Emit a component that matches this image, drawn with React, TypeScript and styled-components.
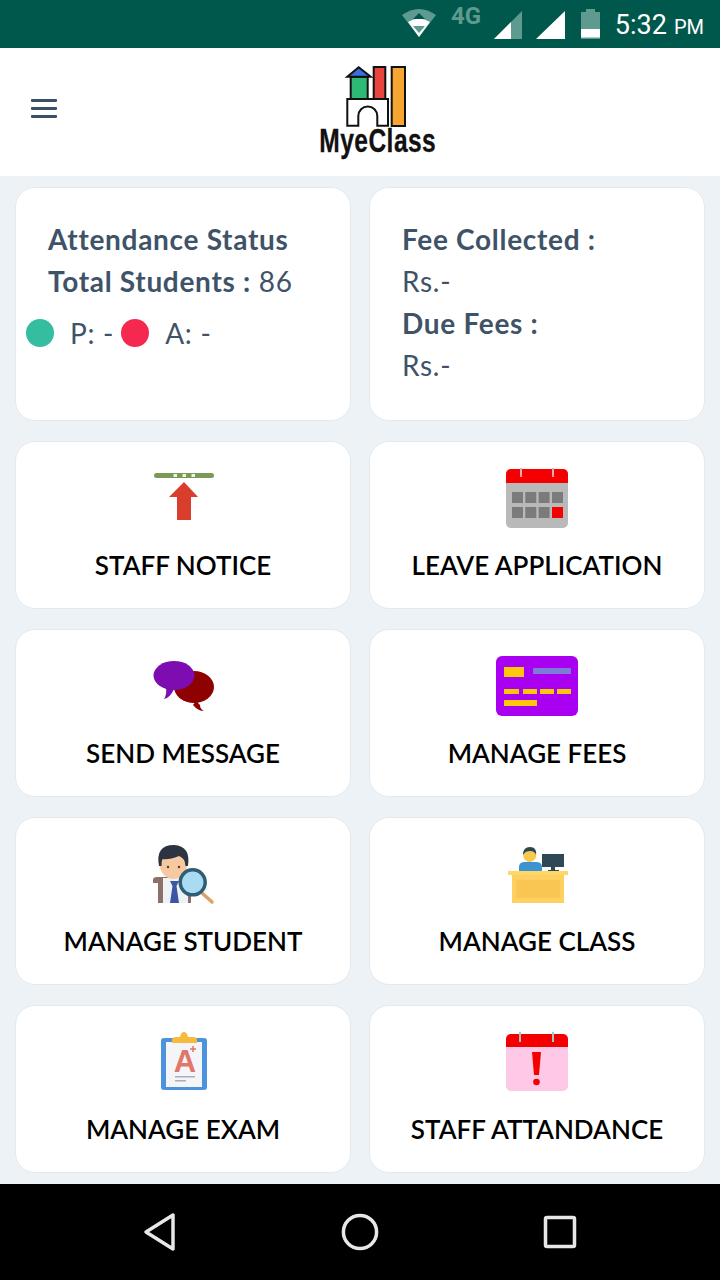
import React from 'react'
import styled, { createGlobalStyle } from 'styled-components'

const GlobalStyle = createGlobalStyle`
  html, body {
    margin: 0;
    padding: 0;
    background: #edf2f6;
    font-family: 'Lato', 'Open Sans', sans-serif;
  }
`

const Screen = styled.div`
  width: 720px;
  height: 1280px;
  display: flex;
  flex-direction: column;
  overflow: hidden;
`

const StatusBar = styled.div`
  height: 48px;
  flex: none;
  background: #00574b;
  display: flex;
  align-items: center;
  justify-content: flex-end;
  color: #ffffff;
  font-family: 'Roboto', sans-serif;
`

const Clock = styled.div`
  margin: 4px 16px 0 11px;
  font-size: 27px;
  line-height: 44px;
  white-space: nowrap;
`

const Meridiem = styled.span`
  font-size: 20px;
  margin-left: 7px;
`

const Header = styled.div`
  height: 128px;
  flex: none;
  background: #ffffff;
  display: flex;
  align-items: center;
  padding-left: 31px;
  box-sizing: border-box;
`

const MenuButton = styled.div`
  width: 26px;
  display: flex;
  flex-direction: column;
  gap: 5px;
  margin-bottom: 7px;
`

const MenuLine = styled.span`
  display: block;
  height: 3px;
  background: #3b5068;
  border-radius: 1px;
`

const Logo = styled.svg`
  width: 170px;
  height: 110px;
  margin: 0 0 4px 243px;
`

const Content = styled.div`
  flex: 1;
  background: #edf2f6;
  padding: 11px 15px;
  box-sizing: border-box;
  display: grid;
  grid-template-columns: 336px 336px;
  grid-auto-rows: 168px;
  grid-template-rows: 234px;
  column-gap: 18px;
  row-gap: 20px;
`

const Card = styled.div`
  background: #ffffff;
  border: 1px solid #e4e9ee;
  border-radius: 20px;
  box-sizing: border-box;
`

const InfoCard = styled(Card)`
  padding: 30px 10px 0 32px;
  color: #3f5368;
  font-size: 28px;
  line-height: 42px;
  letter-spacing: 0.7px;
`

const InfoLine = styled.div`
  white-space: nowrap;
`

const Strong = styled.span`
  font-weight: 700;
`

const LegendRow = styled.div`
  display: flex;
  align-items: center;
  margin: 10px 0 0 -22px;
`

const Dot = styled.span<{ $color: string }>`
  width: 28px;
  height: 28px;
  border-radius: 50%;
  background: ${(props) => props.$color};
  margin-right: 16px;
  flex: none;
`

const LegendText = styled.span`
  margin-right: 7px;
`

const MenuCard = styled(Card)`
  display: flex;
  flex-direction: column;
  align-items: center;
  padding-top: 23px;
`

const MenuIcon = styled.svg`
  width: 90px;
  height: 64px;
  flex: none;
`

const MenuLabel = styled.div`
  margin-top: 20px;
  color: #000000;
  font-size: 26px;
  line-height: 32px;
  font-weight: 600;
  white-space: nowrap;
`

const NavBar = styled.div`
  height: 96px;
  flex: none;
  background: #000000;
  display: flex;
  align-items: center;
  justify-content: center;
  gap: 160px;
`

const NavIcon = styled.svg`
  width: 40px;
  height: 40px;
  fill: none;
  stroke: #e8e8e8;
  stroke-width: 3.5;
  stroke-linejoin: round;
`

const StatusIcons = () => (
  <svg width="205" height="48" viewBox="400 0 205 48">
    <path d="M403 15 Q420 3 437 15 L420 37 Z" fill="#5f9a90" />
    <path d="M409 22 Q420 15 431 22 L420 37 Z" fill="#ffffff" />
    <path d="M420 13 L426 19 L414 19 Z" fill="#00574b" />
    <path d="M414 26 L426 26 L420 33 Z" fill="#5f9a90" />
    <text x="452" y="24" fontFamily="Roboto, sans-serif" fontWeight="700" fontSize="24" fill="#5f9a90">
      4G
    </text>
    <path d="M495 39 L523 11 L523 39 Z" fill="#5f9a90" />
    <path d="M495 39 L512 22 L512 39 Z" fill="#ffffff" />
    <path d="M537 39 L566 11 L566 39 Z" fill="#ffffff" />
    <path d="M587 9 H596 V12 H601 V39 H582 V12 H587 Z" fill="#5f9a90" />
    <rect x="582" y="29" width="19" height="8.5" fill="#ffffff" />
  </svg>
)

const LogoMark = () => (
  <Logo viewBox="0 0 170 110">
    <g stroke="#111111" strokeWidth="2">
      <rect x="50.7" y="21.7" width="17" height="22.3" fill="#2dba75" />
      <path d="M58.7 12.3 L70.7 21.7 H47.3 Z" fill="#3b6fe0" />
      <rect x="73.7" y="12" width="11.6" height="32" fill="#e8453f" />
      <rect x="91.7" y="12" width="13.3" height="59" fill="#f7a531" />
      <path
        d="M47.3 44 H88 V70.7 H77.3 V61 A9.5 9.5 0 0 0 58.3 61 V70.7 H47.3 Z"
        fill="#ffffff"
      />
    </g>
    <text
      transform="translate(19.3 97) scale(0.745 1)"
      fontFamily="'Liberation Sans', sans-serif"
      fontWeight="700"
      fontSize="33"
      letterSpacing="0.6"
      stroke="#111111"
      strokeWidth="0.3"
      fill="#111111"
    >
      MyeClass
    </text>
  </Logo>
)

const NoticeIcon = () => (
  <MenuIcon viewBox="0 0 90 64">
    <rect x="16" y="8" width="60" height="5" rx="2.5" fill="#7b9a55" />
    <rect x="35.5" y="9" width="3.5" height="3" fill="#eef3e6" />
    <rect x="44.5" y="9" width="3.5" height="3" fill="#eef3e6" />
    <rect x="53.5" y="9" width="3.5" height="3" fill="#eef3e6" />
    <path d="M46 17 L60 32 H53 V55 H39 V32 H31 Z" fill="#d93d2b" />
  </MenuIcon>
)

const LeaveIcon = () => (
  <MenuIcon viewBox="0 0 90 64">
    <rect x="14" y="4" width="62" height="59" rx="5" fill="#b9b9b9" />
    <path d="M14 18 V9 a5 5 0 0 1 5 -5 H71 a5 5 0 0 1 5 5 V18 Z" fill="#f40000" />
    <rect x="28" y="3" width="2" height="9" fill="#e7a9a9" />
    <rect x="60" y="3" width="2" height="9" fill="#e7a9a9" />
    {[20, 33.3, 46.6, 60].map((x) => (
      <rect key={x} x={x} y="27" width="11" height="11" fill="#7b7b7b" />
    ))}
    {[20, 33.3, 46.6].map((x) => (
      <rect key={x} x={x} y="42" width="11" height="11" fill="#7b7b7b" />
    ))}
    <rect x="60" y="42" width="11" height="11" fill="#f40000" />
  </MenuIcon>
)

const MessageIcon = () => (
  <MenuIcon viewBox="0 0 90 64">
    <ellipse cx="56" cy="34" rx="20" ry="16" fill="#8f0000" />
    <path d="M58 48 L62 52 Q62 56 66 58 Q60 58 55 52 Z" fill="#8f0000" />
    <ellipse cx="36" cy="22.5" rx="20.5" ry="14.5" fill="#7d0db0" />
    <path d="M28 34 Q29 42 26 46 Q32 45 36 36 Z" fill="#7d0db0" />
  </MenuIcon>
)

const FeesIcon = () => (
  <MenuIcon viewBox="0 0 90 64">
    <rect x="4" y="3" width="82" height="60" rx="6" fill="#aa00f2" />
    <rect x="12" y="14" width="20" height="10" fill="#ffc60a" />
    <rect x="41" y="15" width="38" height="6" rx="1" fill="#7b7bd8" />
    <rect x="12" y="36" width="15" height="5" fill="#ffc60a" />
    <rect x="31" y="36" width="14" height="5" fill="#ffc60a" />
    <rect x="48" y="36" width="14" height="5" fill="#ffc60a" />
    <rect x="65" y="36" width="14" height="5" fill="#ffc60a" />
    <rect x="12" y="47" width="33" height="6" fill="#ffc60a" />
  </MenuIcon>
)

const StudentIcon = () => (
  <MenuIcon viewBox="0 0 90 64">
    <path d="M15 42 V39 Q15 36 19 36 H31 V42 H25 V62 H20 V42 Z" fill="#8d7068" />
    <rect x="48" y="55" width="5" height="7" fill="#8d7068" />
    <rect x="25" y="37" width="25" height="25" fill="#eef2f7" />
    <path d="M32 40 H41 L38.5 45 L41 62 H32 L34.5 45 Z" fill="#3d55a5" />
    <ellipse cx="35.5" cy="24" rx="13.5" ry="14" fill="#f6c9a0" />
    <path d="M21 25 Q17 4 36 4 Q53 5 50 25 L47.5 25 Q47 17 41 15 Q31 19 24.5 18 Q23.5 20 23.5 25 Z" fill="#2b3440" />
    <circle cx="30" cy="26" r="1.2" fill="#5a3825" />
    <circle cx="41" cy="26" r="1.2" fill="#5a3825" />
    <path d="M64 52 L74 61" stroke="#d9a36a" strokeWidth="3.5" strokeLinecap="round" />
    <circle cx="54.7" cy="41.3" r="12.5" fill="#a9dcf2" stroke="#2f5d72" strokeWidth="3.5" />
  </MenuIcon>
)

const ClassIcon = () => (
  <MenuIcon viewBox="0 0 90 64">
    <path d="M27 30 V26 Q27 21 33 21 H44 Q50 21 50 26 V30 Z" fill="#3b93d0" />
    <circle cx="37.7" cy="14.5" r="6.5" fill="#f9c84f" />
    <path d="M31 14 Q31 6 38 6 Q45 6 44 14 Q43 10 38 10 Q33 10 31 14 Z" fill="#2c4454" />
    <rect x="50" y="13" width="22" height="13" fill="#2f4858" />
    <rect x="59" y="26" width="4" height="3" fill="#2f4858" />
    <rect x="56" y="29" width="11" height="1.5" fill="#2f4858" />
    <rect x="20" y="34" width="52" height="28" fill="#ffd060" />
    <rect x="16" y="30" width="60" height="4" fill="#ffd766" />
    <rect x="24" y="39" width="44" height="18" fill="#f9c654" />
  </MenuIcon>
)

const ExamIcon = () => (
  <MenuIcon viewBox="0 0 90 64">
    <rect x="23" y="9" width="46" height="52" rx="3" fill="#4c92dc" />
    <rect x="28" y="13" width="36" height="45" fill="#f3f5f9" />
    <path d="M34 14 V11 Q34 8 38 8 H42 Q43 3 46 3 Q49 3 50 8 H55 Q59 8 59 11 V14 Z" fill="#f9b93a" />
    <text
      x="47"
      y="43"
      textAnchor="middle"
      fontFamily="'Liberation Sans', sans-serif"
      fontWeight="700"
      fontSize="31"
      fill="#e2766b"
    >
      A
    </text>
    <path d="M55 17 V23 M52 20 H58" stroke="#e2766b" strokeWidth="1.5" />
    <rect x="37" y="47" width="20" height="1.5" fill="#a9b0b8" />
    <rect x="37" y="51" width="11" height="1.5" fill="#a9b0b8" />
  </MenuIcon>
)

const AttendanceIcon = () => (
  <MenuIcon viewBox="0 0 90 64">
    <rect x="14" y="5" width="62" height="57" rx="5" fill="#ffc8e6" />
    <path d="M14 18 V10 a5 5 0 0 1 5 -5 H71 a5 5 0 0 1 5 5 V18 Z" fill="#f40000" />
    <rect x="27" y="3" width="2" height="10" fill="#9cc9c9" />
    <rect x="60" y="3" width="2" height="10" fill="#9cc9c9" />
    <path d="M40 23 H49 L47 46 H42 Z" fill="#f40000" />
    <circle cx="44.5" cy="53" r="3.3" fill="#f40000" />
  </MenuIcon>
)

const menuItems = [
  { label: 'STAFF NOTICE', icon: <NoticeIcon /> },
  { label: 'LEAVE APPLICATION', icon: <LeaveIcon /> },
  { label: 'SEND MESSAGE', icon: <MessageIcon /> },
  { label: 'MANAGE FEES', icon: <FeesIcon /> },
  { label: 'MANAGE STUDENT', icon: <StudentIcon /> },
  { label: 'MANAGE CLASS', icon: <ClassIcon /> },
  { label: 'MANAGE EXAM', icon: <ExamIcon /> },
  { label: 'STAFF ATTANDANCE', icon: <AttendanceIcon /> },
]

const App = () => (
  <Screen>
    <GlobalStyle />
    <StatusBar>
      <StatusIcons />
      <Clock>
        5:32<Meridiem>PM</Meridiem>
      </Clock>
    </StatusBar>
    <Header>
      <MenuButton>
        <MenuLine />
        <MenuLine />
        <MenuLine />
      </MenuButton>
      <LogoMark />
    </Header>
    <Content>
      <InfoCard>
        <InfoLine>
          <Strong>Attendance Status</Strong>
        </InfoLine>
        <InfoLine>
          <Strong>Total Students :</Strong> 86
        </InfoLine>
        <LegendRow>
          <Dot $color="#35bd9f" />
          <LegendText>P: -</LegendText>
          <Dot $color="#f5294f" />
          <LegendText>A: -</LegendText>
        </LegendRow>
      </InfoCard>
      <InfoCard>
        <InfoLine>
          <Strong>Fee Collected :</Strong>
        </InfoLine>
        <InfoLine>Rs.-</InfoLine>
        <InfoLine>
          <Strong>Due Fees :</Strong>
        </InfoLine>
        <InfoLine>Rs.-</InfoLine>
      </InfoCard>
      {menuItems.map((item) => (
        <MenuCard key={item.label}>
          {item.icon}
          <MenuLabel>{item.label}</MenuLabel>
        </MenuCard>
      ))}
    </Content>
    <NavBar>
      <NavIcon viewBox="0 0 40 40">
        <path d="M6 20 L33 3 V37 Z" />
      </NavIcon>
      <NavIcon viewBox="0 0 40 40">
        <circle cx="20" cy="20" r="16.6" />
      </NavIcon>
      <NavIcon viewBox="0 0 40 40">
        <rect x="5.5" y="5.5" width="29" height="29" rx="1.5" />
      </NavIcon>
    </NavBar>
  </Screen>
)

export default App
